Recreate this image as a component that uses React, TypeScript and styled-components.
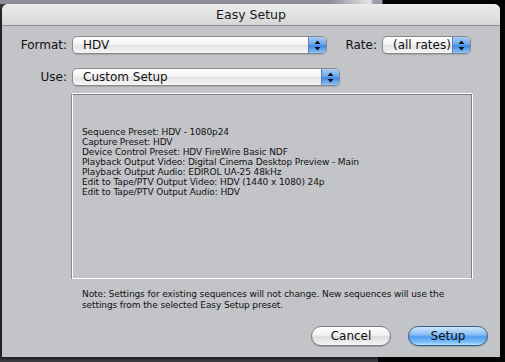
import React from 'react';
import styled, { createGlobalStyle } from 'styled-components';

const uiFont = `"Lucida Grande", "DejaVu Sans", sans-serif`;

const GlobalStyle = createGlobalStyle`
  html, body {
    margin: 0;
    padding: 0;
    background: #111;
  }
  body {
    font-family: ${uiFont};
  }
`;

const Desktop = styled.div`
  width: 505px;
  height: 362px;
  overflow: hidden;
  display: flex;
  flex-direction: column;
  background: linear-gradient(to right, #3b3c42 0, #3b3c42 378px, #050505 378px);
`;

const TopStrip = styled.div`
  height: 4px;
  flex: none;
  background: linear-gradient(
    to right,
    #8d8f98 0,
    #8d8f98 330px,
    #e6e7ea 370px,
    #9a9cb0 374px,
    #9a9cb0 382px,
    #000 383px
  );
`;

const Window = styled.div`
  margin-left: 2px;
  width: 498px;
  height: 353px;
  display: flex;
  flex-direction: column;
  background: #c3c4c8;
  border-radius: 6px 6px 0 0;
  box-shadow: -2px 2px 3px rgba(0, 0, 0, 0.55);
  overflow: hidden;
`;

const TitleBar = styled.div`
  height: 21px;
  flex: none;
  display: flex;
  align-items: center;
  justify-content: center;
  background: linear-gradient(#ececec, #d6d6d6);
  border-bottom: 1px solid #8e8e8e;
  font-size: 12.5px;
  color: #1a1a1a;
`;

const Body = styled.div`
  flex: 1;
  display: flex;
  flex-direction: column;
  padding-top: 10px;
`;

const Row = styled.div<{ $gap?: number }>`
  display: flex;
  align-items: center;
  height: 18px;
  margin-bottom: ${p => p.$gap ?? 0}px;
`;

const Label = styled.span<{ $width: number }>`
  width: ${p => p.$width}px;
  flex: none;
  text-align: right;
  padding-right: 5px;
  box-sizing: border-box;
  font-size: 12px;
  color: #111;
`;

const Popup = styled.div<{ $width: number }>`
  width: ${p => p.$width}px;
  height: 18px;
  box-sizing: border-box;
  flex: none;
  display: flex;
  border: 1px solid #8a8a8e;
  border-radius: 5px;
  overflow: hidden;
  background: linear-gradient(#ffffff 0, #f4f4f4 45%, #e4e4e4 55%, #f6f6f6 100%);
  box-shadow: 0 1px 1px rgba(0, 0, 0, 0.15);
`;

const PopupText = styled.span`
  flex: 1;
  padding-left: 10px;
  font-size: 12px;
  line-height: 16px;
  color: #111;
  white-space: nowrap;
`;

const PopupArrows = styled.span`
  width: 17px;
  flex: none;
  display: flex;
  align-items: center;
  justify-content: center;
  border-left: 1px solid #5c7fb8;
  background: linear-gradient(#a9cdf4 0, #6fa8ec 45%, #3d87e4 55%, #8fc3f8 100%);
`;

const Spacer = styled.span<{ $width: number }>`
  width: ${p => p.$width}px;
  flex: none;
`;

const InfoPanel = styled.div`
  margin-top: 8px;
  margin-left: 70px;
  width: 400px;
  height: 185px;
  box-sizing: border-box;
  border-top: 1px solid #7d7d80;
  border-left: 1px solid #ffffff;
  border-right: 1px solid #7d7d80;
  border-bottom: 1px solid #ffffff;
  box-shadow: 1px 0 0 #ffffff, 0 -1px 0 #ffffff, -1px 0 0 #8a8a8e;
  padding: 32px 0 0 9px;
`;

const InfoLine = styled.div`
  font-size: 9px;
  line-height: 10px;
  color: #111;
  white-space: nowrap;
  letter-spacing: -0.1px;
`;

const Note = styled.p`
  margin: 10px 0 0 80px;
  width: 380px;
  font-size: 9px;
  line-height: 11px;
  color: #111;
  letter-spacing: -0.1px;
`;

const ButtonRow = styled.div`
  margin-top: auto;
  margin-bottom: 11px;
  display: flex;
  justify-content: flex-end;
  gap: 17px;
  padding-right: 12px;
`;

const PushButton = styled.button<{ $primary?: boolean }>`
  width: 80px;
  height: 20px;
  padding: 0;
  border-radius: 10px;
  font-family: ${uiFont};
  font-size: 12px;
  color: #111;
  border: 1px solid ${p => (p.$primary ? '#3a5c95' : '#7d7d80')};
  background: ${p =>
    p.$primary
      ? 'linear-gradient(#cfe6fc 0, #8ec2f5 40%, #4f9ef0 55%, #7cc0fb 85%, #b8e2ff 100%)'
      : 'linear-gradient(#ffffff 0, #f2f2f2 45%, #dcdcdc 55%, #f7f7f7 100%)'};
  box-shadow: 0 1px 1px rgba(0, 0, 0, 0.2);
`;

const Arrows = () => (
  <svg width="7" height="11" viewBox="0 0 7 11">
    <path d="M3.5 0.5 L6.5 4 L0.5 4 Z" fill="#0b1020" />
    <path d="M3.5 10.5 L6.5 7 L0.5 7 Z" fill="#0b1020" />
  </svg>
);

const PopupButton = ({ width, value }: { width: number; value: string }) => (
  <Popup $width={width}>
    <PopupText>{value}</PopupText>
    <PopupArrows>
      <Arrows />
    </PopupArrows>
  </Popup>
);

const presetLines = [
  'Sequence Preset: HDV - 1080p24',
  'Capture Preset: HDV',
  'Device Control Preset: HDV FireWire Basic NDF',
  'Playback Output Video: Digital Cinema Desktop Preview - Main',
  'Playback Output Audio: EDIROL UA-25 48kHz',
  'Edit to Tape/PTV Output Video: HDV (1440 x 1080) 24p',
  'Edit to Tape/PTV Output Audio: HDV',
];

const App = () => {
  return (
    <>
      <GlobalStyle />
      <Desktop>
        <TopStrip />
        <Window>
          <TitleBar>Easy Setup</TitleBar>
          <Body>
            <Row $gap={14}>
              <Label $width={70}>Format:</Label>
              <PopupButton width={255} value="HDV" />
              <Spacer $width={18} />
              <Label $width={37}>Rate:</Label>
              <PopupButton width={89} value="(all rates)" />
            </Row>
            <Row>
              <Label $width={70}>Use:</Label>
              <PopupButton width={268} value="Custom Setup" />
            </Row>
            <InfoPanel>
              {presetLines.map(line => (
                <InfoLine key={line}>{line}</InfoLine>
              ))}
            </InfoPanel>
            <Note>
              Note: Settings for existing sequences will not change. New sequences will use the
              settings from the selected Easy Setup preset.
            </Note>
            <ButtonRow>
              <PushButton>Cancel</PushButton>
              <PushButton $primary>Setup</PushButton>
            </ButtonRow>
          </Body>
        </Window>
      </Desktop>
    </>
  );
};

export default App;
